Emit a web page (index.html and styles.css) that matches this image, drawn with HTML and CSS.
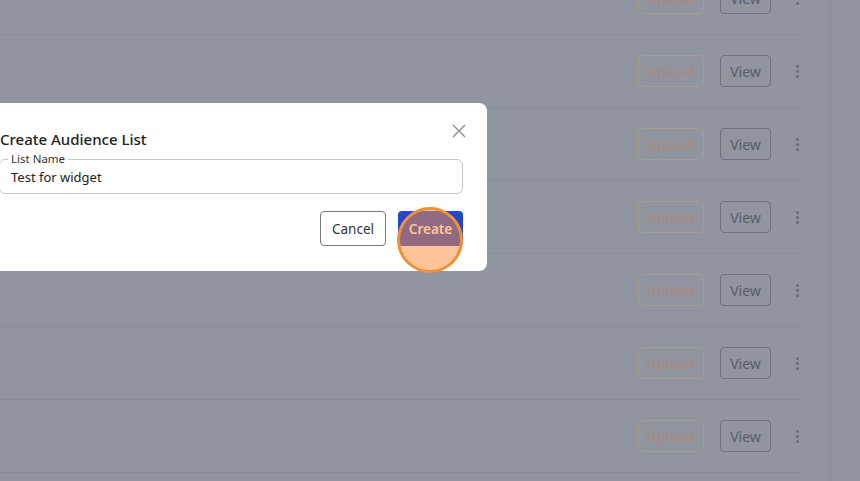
FILE: index.html
```
<!DOCTYPE html>
<html>
<head>
<meta charset="utf-8">
<link rel="stylesheet" href="styles.css">
</head>
<body>
<div class="page">
  <div class="list">
    <div class="row"><div class="actions"><span class="btn upload">Upload</span><span class="btn view">View</span><span class="kebab"><i></i><i></i><i></i></span></div></div>
    <div class="row"><div class="actions"><span class="btn upload">Upload</span><span class="btn view">View</span><span class="kebab"><i></i><i></i><i></i></span></div></div>
    <div class="row"><div class="actions"><span class="btn upload">Upload</span><span class="btn view">View</span><span class="kebab"><i></i><i></i><i></i></span></div></div>
    <div class="row"><div class="actions"><span class="btn upload">Upload</span><span class="btn view">View</span><span class="kebab"><i></i><i></i><i></i></span></div></div>
    <div class="row"><div class="actions"><span class="btn upload">Upload</span><span class="btn view">View</span><span class="kebab"><i></i><i></i><i></i></span></div></div>
    <div class="row"><div class="actions"><span class="btn upload">Upload</span><span class="btn view">View</span><span class="kebab"><i></i><i></i><i></i></span></div></div>
    <div class="row"><div class="actions"><span class="btn upload">Upload</span><span class="btn view">View</span><span class="kebab"><i></i><i></i><i></i></span></div></div>
  </div>
  <div class="side"></div>
</div>

<div class="modal">
  <div class="modal-head">
    <h2 class="title">Create Audience List</h2>
    <svg class="close" width="14" height="14" viewBox="0 0 14 14"><path d="M1 1L13 13M13 1L1 13" stroke="#8a8a8a" stroke-width="1.4" fill="none"/></svg>
  </div>
  <div class="field">
    <span class="field-label">List Name</span>
    <span class="field-value">Test for widget</span>
  </div>
  <div class="modal-foot">
    <button class="mbtn cancel">Cancel</button>
    <button class="mbtn create">Create</button>
  </div>
</div>
<div class="spot"></div>
</body>
</html>
```
FILE: styles.css
```
html, body {
  margin: 0;
  padding: 0;
  width: 860px;
  height: 481px;
  overflow: hidden;
  background: #9195a0;
  font-family: "Noto Sans", "Open Sans", sans-serif;
}
.page {
  display: flex;
  height: 481px;
}
.list {
  width: 803px;
  margin-top: -38px;
}
.side {
  width: 1px;
  margin-left: 27px;
  background: #898d98;
}
.row {
  height: 72px;
  border-bottom: 1px solid #8b8f9a;
  display: flex;
  align-items: center;
  justify-content: flex-end;
}
.actions {
  display: flex;
  align-items: center;
  gap: 16px;
}
.btn {
  box-sizing: border-box;
  height: 32px;
  display: flex;
  align-items: center;
  justify-content: center;
  border-radius: 4px;
  font-size: 14px;
}
.upload {
  width: 66px;
  border: 1px solid #a59c8a;
  color: #a58c84;
  font-weight: 600;
}
.view {
  width: 51px;
  border: 1px solid #6d7280;
  color: #575c6a;
}
.kebab {
  width: 8px;
  margin-left: 6px;
  margin-right: 2px;
  display: flex;
  flex-direction: column;
  align-items: center;
  gap: 2px;
}
.kebab i {
  width: 3px;
  height: 3px;
  border-radius: 50%;
  background: #666b78;
}
.modal {
  position: absolute;
  left: -24px;
  top: 103px;
  width: 511px;
  height: 168px;
  box-sizing: border-box;
  background: #fff;
  border-radius: 8px;
  padding: 20px 24px 0 24px;
}
.modal-head {
  display: flex;
  justify-content: space-between;
  align-items: flex-start;
  height: 36px;
}
.title {
  margin: 6px 0 0 0;
  font-size: 15px;
  font-weight: 500;
  color: #222;
  line-height: 20px;
}
.close {
  margin-top: 1px;
  margin-right: -3px;
}
.field {
  position: relative;
  box-sizing: border-box;
  height: 35px;
  border: 1px solid #c8c8c8;
  border-radius: 6px;
  margin-left: -1px;
  padding-left: 11px;
  display: flex;
  align-items: center;
}
.field-label {
  position: absolute;
  left: 8px;
  top: -8px;
  background: #fff;
  padding: 0 3px;
  font-size: 11.5px;
  line-height: 14px;
  color: #333;
}
.field-value {
  font-size: 13px;
  color: #222;
  margin-top: 1px;
}
.modal-foot {
  display: flex;
  justify-content: flex-end;
  gap: 12px;
  margin-top: 17px;
}
.mbtn {
  height: 35px;
  box-sizing: border-box;
  border-radius: 4px;
  font-family: "Noto Sans", "Open Sans", sans-serif;
  font-size: 13.5px;
  padding: 0;
}
.cancel {
  width: 66px;
  background: #fff;
  border: 1px solid #7a7a7a;
  color: #333;
}
.create {
  width: 65px;
  background: #2348cf;
  border: none;
  color: #fff;
  font-weight: 600;
}
.spot {
  position: absolute;
  left: 397px;
  top: 207px;
  width: 66px;
  height: 66px;
  box-sizing: border-box;
  border-radius: 50%;
  border: 3px solid #f0903a;
  background: rgba(255, 140, 50, 0.5);
}
```
